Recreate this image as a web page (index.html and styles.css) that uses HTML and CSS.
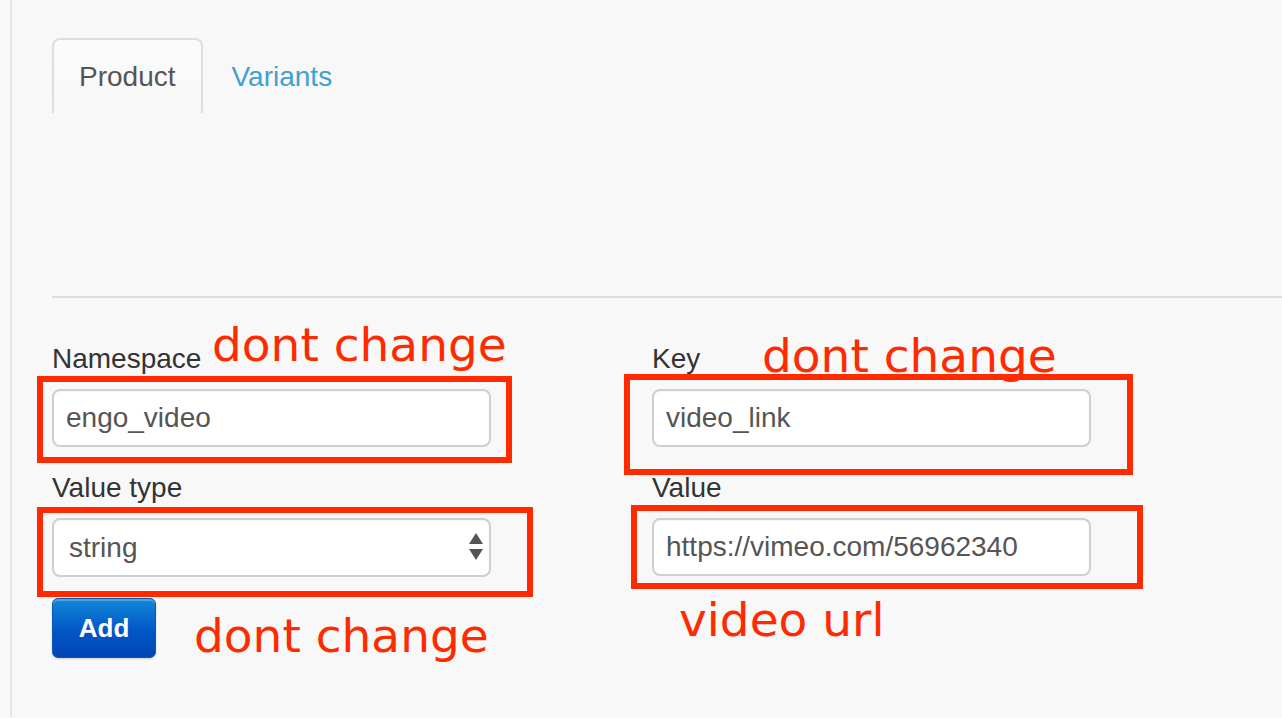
FILE: index.html
```html
<!DOCTYPE html>
<html lang="en">
<head>
<meta charset="utf-8">
<title>Product metafields</title>
<link rel="stylesheet" href="styles.css">
</head>
<body>
<div class="screen">
  <div class="page">
    <nav class="tabs">
      <span class="tab tab-active">Product</span>
      <a class="tab tab-link" href="#">Variants</a>
    </nav>
    <div class="divider"></div>
    <form class="form">
      <div class="col">
        <div class="field">
          <label class="label">Namespace</label>
          <input class="control" type="text" value="engo_video">
        </div>
        <div class="field">
          <label class="label">Value type</label>
          <div class="select-wrap">
            <select class="control select"><option>string</option></select>
            <svg class="select-arrow" width="14" height="28" viewBox="0 0 14 28"><path d="M7 0 L14 11 L0 11 Z" fill="#555"/><path d="M0 16 L14 16 L7 27 Z" fill="#555"/></svg>
          </div>
        </div>
        <div class="actions"><button class="btn" type="button">Add</button></div>
      </div>
      <div class="col">
        <div class="field">
          <label class="label">Key</label>
          <input class="control" type="text" value="video_link">
        </div>
        <div class="field">
          <label class="label">Value</label>
          <input class="control" type="text" value="https://vimeo.com/56962340">
        </div>
      </div>
    </form>
  </div>

  <div class="mark box-ns"></div>
  <div class="mark box-key"></div>
  <div class="mark box-type"></div>
  <div class="mark box-value"></div>
  <div class="note note-ns">dont change</div>
  <div class="note note-key">dont change</div>
  <div class="note note-add">dont change</div>
  <div class="note note-value">video url</div>
</div>
</body>
</html>
```

FILE: styles.css
```css
* { box-sizing: border-box; }
html, body { margin: 0; padding: 0; }
body {
  background: #f9f9f9;
  font-family: "Liberation Sans", Arial, Helvetica, sans-serif;
  overflow: hidden;
}
.screen {
  position: relative;
  width: 1282px;
  height: 718px;
  overflow: hidden;
}
.page {
  margin-left: 10px;
  height: 717px;
  border-left: 2px solid #e4e4e4;
  background: #f8f8f8;
  padding: 38px 0 0 40px;
}
.tabs {
  display: flex;
  align-items: flex-start;
}
.tab {
  display: block;
  font-size: 28px;
  line-height: 40px;
  padding: 17px 25px 16px;
  border: 2px solid transparent;
  border-bottom: none;
  text-decoration: none;
}
.tab-active {
  color: #555;
  border-color: #dedede;
  border-radius: 8px 8px 0 0;
  background: linear-gradient(#fbfbfb, #f8f8f8);
}
.tab-link {
  color: #3fa0d2;
  margin-left: 2px;
}
.divider {
  margin-top: 183px;
  height: 2px;
  background: #dedede;
}
.form {
  display: grid;
  grid-template-columns: 600px 1fr;
  margin-top: 41px;
}
.col {
  display: flex;
  flex-direction: column;
  gap: 21px;
}
.field {
  display: flex;
  flex-direction: column;
}
.label {
  font-size: 28px;
  line-height: 40px;
  color: #333;
  margin-bottom: 10px;
}
.control {
  width: 439px;
  height: 58px;
  border: 2px solid #cfcfcf;
  border-radius: 8px;
  background: #fff;
  font-family: "Liberation Sans", Arial, Helvetica, sans-serif;
  font-size: 28px;
  color: #555;
  padding: 0 12px;
  box-shadow: inset 0 1px 1px rgba(0,0,0,0.04);
}
.select-wrap {
  position: relative;
  width: 439px;
}
.select {
  appearance: none;
  -webkit-appearance: none;
  padding-left: 15px;
  height: 59px;
}
.select-arrow {
  position: absolute;
  right: 8px;
  top: 15px;
}
.actions { display: flex; }
.btn {
  width: 104px;
  height: 60px;
  border: 1px solid #0a55b5;
  border-radius: 6px;
  background: linear-gradient(#1088d6, #0256c7 55%, #0046b6);
  color: #fff;
  font-family: "Liberation Sans", Arial, Helvetica, sans-serif;
  font-size: 26px;
  font-weight: bold;
  box-shadow: inset 0 2px 0 rgba(255,255,255,0.25), 0 1px 2px rgba(0,0,0,0.15);
  padding: 0;
}

/* annotations */
.mark {
  position: absolute;
  border: 6px solid #ff2a00;
}
.box-ns { left: 37px; top: 376px; width: 475px; height: 87px; }
.box-type { left: 37px; top: 507px; width: 496px; height: 90px; }
.box-key { left: 624px; top: 374px; width: 509px; height: 101px; }
.box-value { left: 631px; top: 505px; width: 512px; height: 84px; }
.note {
  position: absolute;
  color: #ff2a00;
  font-family: "DejaVu Sans", Verdana, sans-serif;
  font-size: 47px;
  line-height: 56px;
  white-space: nowrap;
}
.note-ns { left: 212px; top: 317px; }
.note-key { left: 762px; top: 328px; }
.note-add { left: 194px; top: 608px; }
.note-value { left: 679px; top: 592px; }
```
